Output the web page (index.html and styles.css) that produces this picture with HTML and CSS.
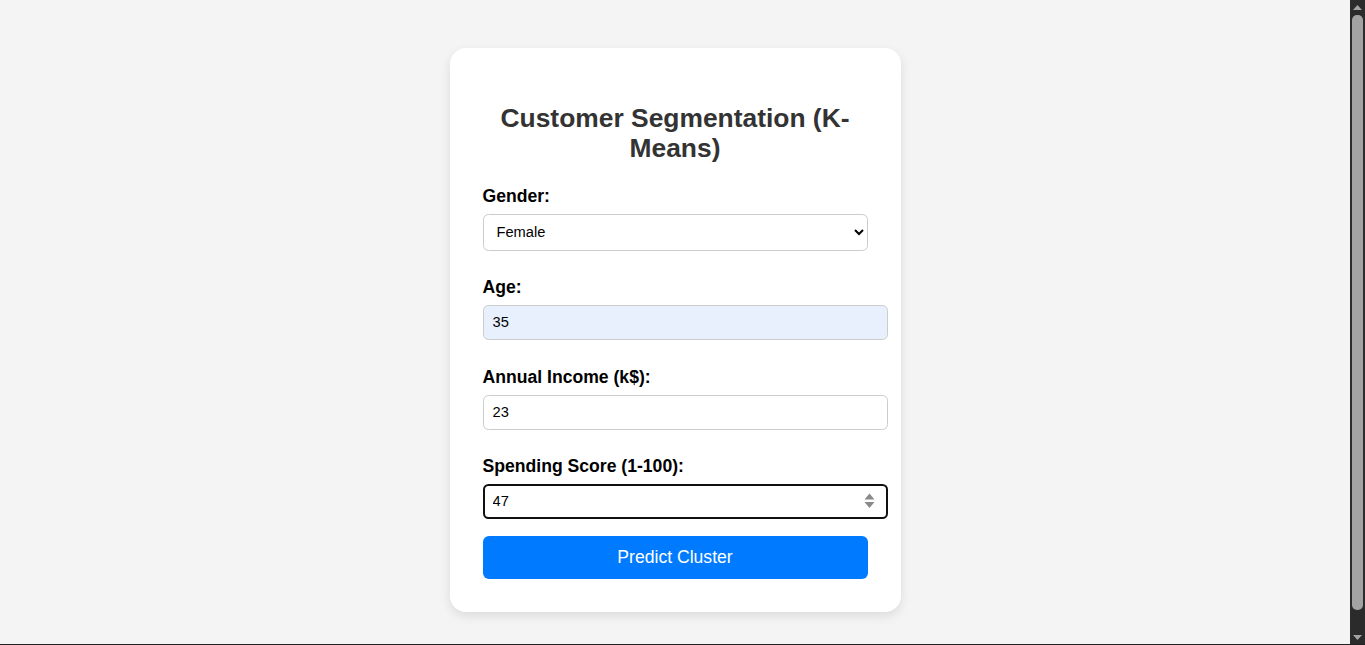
FILE: index.html
```html
<!DOCTYPE html>
<html lang="en">
<head>
<meta charset="utf-8">
<title>Customer Segmentation (K-Means)</title>
<link rel="stylesheet" href="styles.css">
</head>
<body>
<div class="card">
  <h2 class="title">Customer Segmentation (K-Means)</h2>
  <form class="form">
    <label class="label" for="gender">Gender:</label>
    <select class="field select" id="gender">
      <option>Male</option>
      <option selected>Female</option>
    </select>

    <label class="label" for="age">Age:</label>
    <input class="field input autofilled" id="age" type="number" value="35">

    <label class="label" for="income">Annual Income (k$):</label>
    <input class="field input tight" id="income" type="number" value="23">

    <label class="label" for="score">Spending Score (1-100):</label>
    <div class="input-wrap">
      <input class="field input focused" id="score" type="number" value="47">
      <svg class="spinner" width="11" height="16" viewBox="0 0 11 16" aria-hidden="true">
        <path d="M5.5 0.5 L10.5 6.5 L0.5 6.5 Z" fill="#8a8a8a"/>
        <path d="M0.5 9 L10.5 9 L5.5 15 Z" fill="#8a8a8a"/>
      </svg>
    </div>

    <button class="button" type="button">Predict Cluster</button>
  </form>
</div>

<div class="scrollbar" aria-hidden="true">
  <svg class="sb-arrow" width="15" height="15" viewBox="0 0 15 15"><path d="M3 10 L7.5 5 L12 10 Z" fill="#a3a3a3"/></svg>
  <div class="sb-track"><div class="sb-thumb"></div></div>
  <svg class="sb-arrow" width="15" height="15" viewBox="0 0 15 15"><path d="M3 5 L12 5 L7.5 10 Z" fill="#a3a3a3"/></svg>
</div>
<div class="frame-line" aria-hidden="true"></div>
</body>
</html>
```

FILE: styles.css
```css
body {
  margin: 0;
  padding: 48px 15px 52px 0;
  background: #f4f4f4;
  color: #000;
  font-family: "Liberation Sans", Arial, sans-serif;
  display: flex;
  justify-content: center;
}

.card {
  width: 385px;
  padding: 33px;
  background: #fff;
  border-radius: 16px;
  box-shadow: 0 4px 11px rgba(0, 0, 0, 0.1);
}

.title {
  margin: 22px 0;
  font-size: 26.4px;
  font-weight: bold;
  line-height: 30.4px;
  color: #333;
  text-align: center;
}

.form {
  display: flex;
  flex-direction: column;
  align-items: flex-start;
}

.label {
  display: block;
  font-size: 17.6px;
  font-weight: bold;
  line-height: 20px;
  margin-bottom: 8px;
}

.field {
  font-family: "Liberation Sans", Arial, sans-serif;
  font-size: 14.67px;
  color: #000;
  border: 1px solid #ccc;
  border-radius: 5.5px;
  margin: 0 0 27px;
}

.select {
  box-sizing: border-box;
  width: 385px;
  height: 37px;
  padding: 0 5px 0 9px;
  background: #fff;
  margin-bottom: 26px;
}

.input {
  box-sizing: content-box;
  width: 385px;
  height: 17px;
  padding: 8px 9px;
  background: #fff;
  outline: none;
  -moz-appearance: textfield;
}

.input::-webkit-inner-spin-button,
.input::-webkit-outer-spin-button {
  -webkit-appearance: none;
  margin: 0;
}

.tight {
  margin-bottom: 26px;
}

.autofilled {
  background: #e8f0fe;
}

.focused {
  border: 2px solid #101010;
  padding: 7px 8px;
  margin-bottom: 17px;
}

.input-wrap {
  position: relative;
}

.spinner {
  position: absolute;
  right: 13px;
  top: 9px;
}

.button {
  box-sizing: border-box;
  width: 385px;
  height: 43px;
  padding: 0;
  border: none;
  border-radius: 6px;
  background: #007bff;
  color: #fff;
  font-family: "Liberation Sans", Arial, sans-serif;
  font-size: 17.6px;
  cursor: pointer;
}

.scrollbar {
  position: fixed;
  top: 0;
  right: 0;
  bottom: 0;
  width: 15px;
  background: #2b2b2b;
  display: flex;
  flex-direction: column;
}

.sb-arrow {
  flex: none;
  display: block;
}

.sb-track {
  flex: 1;
  display: flex;
  padding: 0 2px 20px;
}

.sb-thumb {
  flex: 1;
  background: #a3a3a3;
  border-radius: 5px;
}

.frame-line {
  position: fixed;
  left: 0;
  right: 0;
  bottom: 0;
  height: 1px;
  background: #222;
}
```
